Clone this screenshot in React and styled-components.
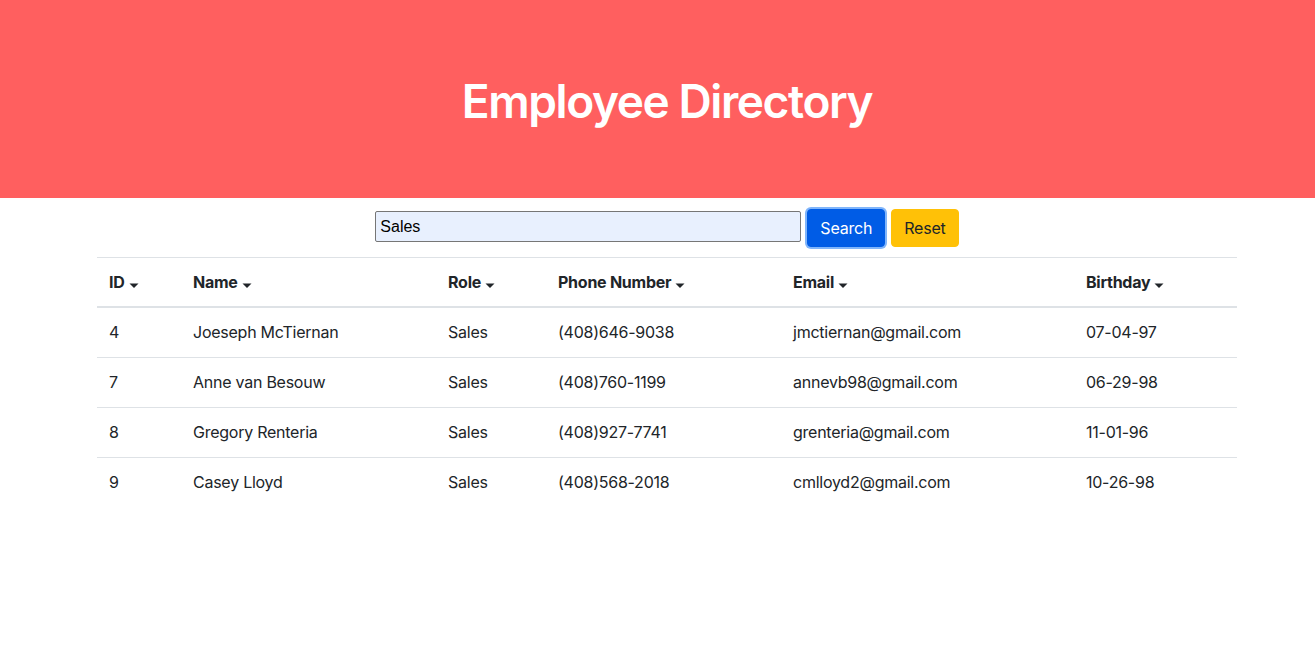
import React from 'react';
import styled, { createGlobalStyle } from 'styled-components';

const GlobalStyle = createGlobalStyle`
	body {
		margin: 0;
		font-family: Inter, 'Noto Sans', sans-serif;
		font-size: 16px;
		line-height: 1.5;
		color: #212529;
		background: #fff;
	}
`;

const Banner = styled.header`
	height: 198px;
	box-sizing: border-box;
	padding: 6px 0 0 19px;
	background-color: #ff5f5f;
	display: flex;
	align-items: center;
	justify-content: center;
`;

const Title = styled.h1`
	margin: 0;
	color: #fff;
	font-size: 46px;
	font-weight: 600;
	line-height: 1.2;
	letter-spacing: -1.4px;
`;

const Main = styled.main`
	padding-left: 19px;
`;

const SearchForm = styled.form`
	display: flex;
	justify-content: center;
	align-items: center;
	gap: 6px;
	padding: 11px 0 10px;
`;

const SearchInput = styled.input`
	width: 426px;
	height: 31px;
	margin-bottom: 3px;
	box-sizing: border-box;
	padding: 1px 4px;
	border: 1px solid #767676;
	border-radius: 2px;
	background-color: #e8f0fe;
	font-family: 'Liberation Sans', Arial, sans-serif;
	font-size: 16px;
	color: #000;
	outline: none;
`;

const Button = styled.button`
	height: 38px;
	padding: 0 12px;
	border: 1px solid ${({ $bg }) => $bg};
	border-radius: 4px;
	background-color: ${({ $bg }) => $bg};
	color: ${({ $fg }) => $fg};
	font-family: inherit;
	font-size: 16px;
	line-height: 24px;
	letter-spacing: -0.2px;
	box-shadow: ${({ $focus }) => ($focus ? '0 0 0 2px #80b5fb' : 'none')};
	cursor: pointer;
`;

const TableWrap = styled.div`
	width: 1140px;
	margin: 0 auto;
`;

const Table = styled.table`
	width: 100%;
	border-collapse: collapse;
	table-layout: fixed;
	line-height: 25px;
	letter-spacing: -0.25px;
`;

const Th = styled.th`
	box-sizing: border-box;
	width: ${({ $w }) => $w}px;
	padding: 12px;
	line-height: 24px;
	text-align: left;
	font-weight: 700;
	border-top: 1px solid #dee2e6;
	border-bottom: 2px solid #dee2e6;
	white-space: nowrap;
`;

const Td = styled.td`
	padding: 12px;
	border-top: 1px solid #dee2e6;
	white-space: nowrap;
`;

const Caret = styled.svg`
	width: 10px;
	height: 8px;
	margin-left: 4px;
	vertical-align: -1px;
`;

const SortCaret = () => (
	<Caret viewBox="0 0 10 8">
		<path d="M0.5 2.5h9L5 7z" fill="#212529" />
	</Caret>
);

const columns = [
	['ID', 84],
	['Name', 255],
	['Role', 110],
	['Phone Number', 235],
	['Email', 293],
	['Birthday', 163],
];

const employees = [
	[4, 'Joeseph McTiernan', 'Sales', '(408)646-9038', 'jmctiernan@gmail.com', '07-04-97'],
	[7, 'Anne van Besouw', 'Sales', '(408)760-1199', 'annevb98@gmail.com', '06-29-98'],
	[8, 'Gregory Renteria', 'Sales', '(408)927-7741', 'grenteria@gmail.com', '11-01-96'],
	[9, 'Casey Lloyd', 'Sales', '(408)568-2018', 'cmlloyd2@gmail.com', '10-26-98'],
];

export default function App() {
	return (
		<>
			<GlobalStyle />
			<Banner>
				<Title>Employee Directory</Title>
			</Banner>
			<Main>
				<SearchForm onSubmit={(e) => e.preventDefault()}>
					<SearchInput defaultValue="Sales" />
					<Button type="submit" $bg="#005ce6" $fg="#fff" $focus>
						Search
					</Button>
					<Button type="button" $bg="#ffc107" $fg="#212529">
						Reset
					</Button>
				</SearchForm>
				<TableWrap>
					<Table>
						<thead>
							<tr>
								{columns.map(([label, w]) => (
									<Th key={label} $w={w}>
										{label}
										<SortCaret />
									</Th>
								))}
							</tr>
						</thead>
						<tbody>
							{employees.map((row) => (
								<tr key={row[0]}>
									{row.map((cell, i) => (
										<Td key={i}>{cell}</Td>
									))}
								</tr>
							))}
						</tbody>
					</Table>
				</TableWrap>
			</Main>
		</>
	);
}
